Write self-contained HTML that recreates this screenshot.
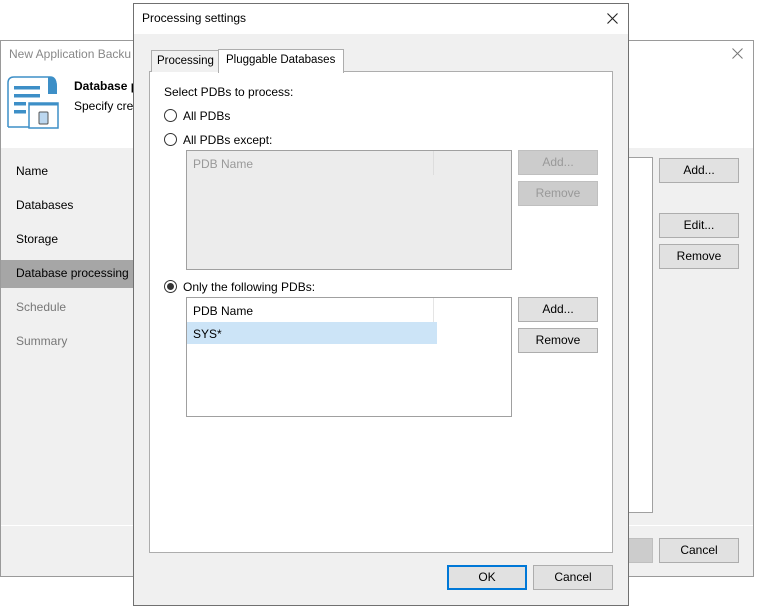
<!DOCTYPE html>
<html><head><style>
*{box-sizing:border-box;margin:0;padding:0}
body{width:762px;height:612px;background:#fff;position:relative;overflow:hidden;font-family:"Liberation Sans",sans-serif;font-size:12px;color:#000}
.a{position:absolute}
.btn{position:absolute;background:#e1e1e1;border:1px solid #adadad;text-align:center;line-height:22px;font-size:12px}
.dis{background:#cccccc;border-color:#bfbfbf;color:#999}
.radio{position:absolute;width:13px;height:13px;border:1px solid #333;border-radius:50%;background:#fff}
</style></head><body>
<div class="a" style="left:0;top:40px;width:754px;height:537px;border:1px solid #9a9a9a;background:#f0f0f0"></div>
<div class="a" style="left:1px;top:41px;width:752px;height:107px;background:#fff"></div>
<div class="a" style="left:9px;top:47px;color:#888;font-size:12px">New Application Backu</div>
<svg class="a" style="left:732px;top:48px" width="11" height="11"><path d="M0.5 0.5L10.5 10.5M10.5 0.5L0.5 10.5" stroke="#777" stroke-width="1"/></svg>
<svg class="a" style="left:6px;top:75px" width="54" height="55" viewBox="0 0 54 55">
<path d="M2 52 V8 Q2 2 8 2 H44 Q50 2 50 10 V18" fill="none" stroke="#3d8fc7" stroke-width="1.5"/>
<path d="M42 2 Q51 2 51 11 V19 H42 Z" fill="#3d8fc7"/>
<rect x="8" y="11" width="26" height="3.5" fill="#3d8fc7"/>
<rect x="8" y="19" width="26" height="3.5" fill="#3d8fc7"/>
<rect x="8" y="27" width="12" height="3.5" fill="#3d8fc7"/>
<rect x="8" y="35" width="12" height="3.5" fill="#3d8fc7"/>
<path d="M2 52 H23" stroke="#3d8fc7" stroke-width="1.5"/>
<rect x="23" y="28" width="29" height="25" fill="#fff" stroke="#3d8fc7" stroke-width="1.5"/>
<path d="M23 29.5H52" stroke="#3d8fc7" stroke-width="2"/>
<rect x="33" y="37" width="9" height="12" rx="1" fill="#bcd7ef" stroke="#555" stroke-width="1"/>
</svg>
<div class="a" style="left:74px;top:79px;font-weight:bold;font-size:12px">Database p</div>
<div class="a" style="left:74px;top:99px">Specify cre</div>
<div class="a" style="left:1px;top:260px;width:132px;height:28px;background:#a6a6a6"></div>
<div class="a" style="left:16px;top:164px">Name</div>
<div class="a" style="left:16px;top:198px">Databases</div>
<div class="a" style="left:16px;top:232px">Storage</div>
<div class="a" style="left:16px;top:266px">Database processing</div>
<div class="a" style="left:16px;top:300px;color:#777">Schedule</div>
<div class="a" style="left:16px;top:334px;color:#777">Summary</div>
<div class="a" style="left:600px;top:157px;width:53px;height:356px;background:#fff;border:1px solid #a0a0a0"></div>
<div class="btn" style="left:659px;top:158px;width:80px;height:25px">Add...</div>
<div class="btn" style="left:659px;top:213px;width:80px;height:25px">Edit...</div>
<div class="btn" style="left:659px;top:244px;width:80px;height:25px">Remove</div>
<div class="a" style="left:1px;top:525px;width:752px;height:1px;background:#fff"></div>
<div class="btn dis" style="left:600px;top:538px;width:53px;height:25px"></div>
<div class="btn" style="left:659px;top:538px;width:80px;height:25px">Cancel</div>
<div class="a" style="left:133px;top:3px;width:496px;height:603px;border:1px solid #707070;background:#f0f0f0"></div>
<div class="a" style="left:134px;top:4px;width:494px;height:30px;background:#fff"></div>
<div class="a" style="left:142px;top:11px">Processing settings</div>
<svg class="a" style="left:607px;top:13px" width="11" height="11"><path d="M0.5 0.5L10.5 10.5M10.5 0.5L0.5 10.5" stroke="#222" stroke-width="1.1"/></svg>
<div class="a" style="left:149px;top:71px;width:464px;height:482px;background:#fff;border:1px solid #adadad"></div>
<div class="a" style="left:151px;top:50px;width:68px;height:22px;background:#f0f0f0;border:1px solid #adadad;border-bottom:none;padding:4px 0 0 5px;font-size:11.5px">Processing</div>
<div class="a" style="left:218px;top:49px;width:126px;height:24px;background:#fff;border:1px solid #adadad;border-bottom:none;padding:4px 0 0 7px;font-size:11.5px">Pluggable Databases</div>
<div class="a" style="left:164px;top:85px">Select PDBs to process:</div>
<div class="radio" style="left:164px;top:109px"></div>
<div class="a" style="left:183px;top:109px">All PDBs</div>
<div class="radio" style="left:164px;top:133px"></div>
<div class="a" style="left:183px;top:133px">All PDBs except:</div>
<div class="a" style="left:186px;top:150px;width:326px;height:120px;background:#ececec;border:1px solid #a0a0a0"></div>
<div class="a" style="left:193px;top:157px;color:#999">PDB Name</div>
<div class="a" style="left:433px;top:151px;width:1px;height:24px;background:#ddd"></div>
<div class="btn dis" style="left:518px;top:150px;width:80px;height:25px">Add...</div>
<div class="btn dis" style="left:518px;top:181px;width:80px;height:25px">Remove</div>
<div class="radio" style="left:164px;top:280px"></div>
<div class="a" style="left:167px;top:283px;width:7px;height:7px;border-radius:50%;background:#333"></div>
<div class="a" style="left:183px;top:280px">Only the following PDBs:</div>
<div class="a" style="left:186px;top:297px;width:326px;height:120px;background:#fff;border:1px solid #a0a0a0"></div>
<div class="a" style="left:193px;top:304px">PDB Name</div>
<div class="a" style="left:433px;top:298px;width:1px;height:24px;background:#e5e5e5"></div>
<div class="a" style="left:187px;top:322px;width:250px;height:22px;background:#cce4f7"></div>
<div class="a" style="left:193px;top:327px">SYS*</div>
<div class="btn" style="left:518px;top:297px;width:80px;height:25px">Add...</div>
<div class="btn" style="left:518px;top:328px;width:80px;height:25px">Remove</div>
<div class="btn" style="left:447px;top:565px;width:80px;height:25px;border:2px solid #0078d7;line-height:21px">OK</div>
<div class="btn" style="left:533px;top:565px;width:80px;height:25px">Cancel</div>
</body></html>
